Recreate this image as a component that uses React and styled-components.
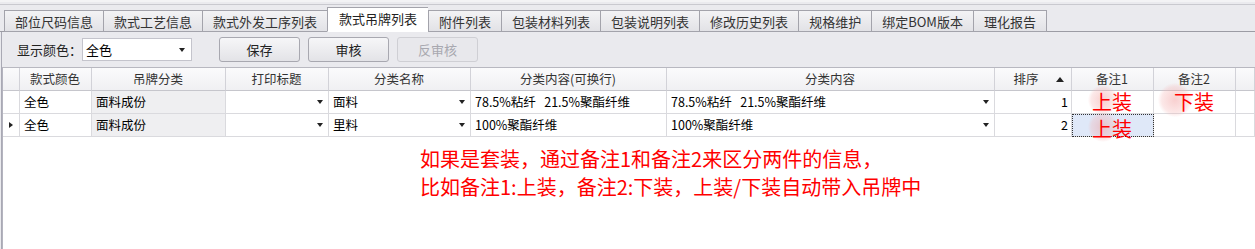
import React from "react";
import styled, { createGlobalStyle, css } from "styled-components";

const GlobalStyle = createGlobalStyle`
  html, body { margin: 0; padding: 0; background: #ffffff; }
  body { font-family: "Noto Sans CJK SC", "Noto Sans", sans-serif; }
  * { box-sizing: border-box; }
`;

const Page = styled.div`
  width: 1255px;
  height: 249px;
  overflow: hidden;
  display: flex;
  flex-direction: column;
  background: #eaeaee;
`;

const TopStrip = styled.div`
  height: 5px;
  border-top: 2px solid #f3f3f5;
  border-bottom: 1px solid #c9c9cf;
  background: #eaeaee;
`;

const TabStrip = styled.div`
  display: flex;
  align-items: flex-end;
  height: 27px;
  padding-left: 4px;
  border-bottom: 1px solid #9c9ca4;
`;

const Tab = styled.div`
  height: 22px;
  margin-bottom: -1px;
  padding: 0 10px;
  display: flex;
  align-items: center;
  font-size: 13px;
  line-height: 1;
  color: #333;
  white-space: nowrap;
  background: linear-gradient(#f3f3f5, #e2e2e6);
  border: 1px solid #a3a3ab;
  border-right: none;
  &:last-child { border-right: 1px solid #a3a3ab; }
  ${(p) =>
    p.$active &&
    css`
      height: 25px;
      padding: 0 11px 2px;
      background: #ffffff;
      border-bottom-color: #ffffff;
      color: #222;
    `}
`;

const Panel = styled.div`
  flex: 1;
  display: flex;
  flex-direction: column;
  border-left: 1px solid #a9a9b4;
  margin-left: 1px;
`;

const Toolbar = styled.div`
  height: 35px;
  display: flex;
  align-items: center;
  padding-left: 15px;
`;

const Label = styled.span`
  font-size: 13px;
  color: #222;
  line-height: 1;
`;

const Select = styled.div`
  width: 110px;
  height: 23px;
  background: #fff;
  border: 1px solid #c4c4cc;
  display: flex;
  align-items: center;
  justify-content: space-between;
  padding: 0 6px 0 3px;
  font-size: 13px;
  color: #000;
  margin-right: 27px;
`;

const Caret = styled.span`
  width: 0;
  height: 0;
  border-left: 3.5px solid transparent;
  border-right: 3.5px solid transparent;
  border-top: 4px solid #222;
  flex-shrink: 0;
`;

const SortUp = styled.span`
  width: 0;
  height: 0;
  border-left: 4px solid transparent;
  border-right: 4px solid transparent;
  border-bottom: 5px solid #222;
  position: absolute;
  right: 7px;
  top: 9px;
`;

const Button = styled.div`
  width: 81px;
  height: 25px;
  margin-right: 8px;
  border: 1px solid ${(p) => (p.$disabled ? "#cfcfd4" : "#a8a8b0")};
  border-radius: 3px;
  background: ${(p) =>
    p.$disabled ? "#e8e8ec" : "linear-gradient(#f6f6f8, #e3e3e7)"};
  color: ${(p) => (p.$disabled ? "#a8a8b0" : "#222")};
  font-size: 13px;
  display: flex;
  align-items: center;
  justify-content: center;
`;

const GridArea = styled.div`
  flex: 1;
  background: #ffffff;
  border-top: 1px solid #b8b8c0;
  border-left: 1px solid #b4b4bf;
  display: flex;
  flex-direction: column;
`;

const COLS = "17px 72px 134px 103px 142px 196px 328px 77px 82px 82px 1fr";

const Row = styled.div`
  display: grid;
  grid-template-columns: ${COLS};
  height: 23px;
  ${(p) =>
    p.$header &&
    css`
      background: linear-gradient(#fbfbfc, #efeff2);
    `}
`;

const Cell = styled.div`
  position: relative;
  border-right: 1px solid ${(p) => (p.$header ? "#d2d2d8" : "#dadade")};
  border-bottom: 1px solid ${(p) => (p.$header ? "#c6c6cc" : "#dadade")};
  display: flex;
  align-items: center;
  justify-content: ${(p) =>
    p.$align === "center" ? "center" : p.$align === "right" ? "flex-end" : "space-between"};
  padding: 0 ${(p) => (p.$align === "right" ? "3px" : "5px")} 0 4px;
  padding-right: ${(p) => (p.$padRight ? `${p.$padRight}px` : undefined)};
  font-size: 12.5px;
  line-height: 1;
  color: ${(p) => (p.$header ? "#333" : "#000")};
  background: ${(p) => p.$bg || "transparent"};
  white-space: ${(p) => (p.$pre ? "pre" : "nowrap")};
  ${(p) =>
    p.$selected &&
    css`
      background: #dfe8f8;
      outline: 1px dotted #333;
      outline-offset: -1px;
    `}
`;

const NoteText = styled.span`
  position: relative;
  z-index: 1;
  font-size: 20px;
  color: #ff0000;
  line-height: 1;
  top: ${(p) => p.$shift || 0}px;
`;

const Glow = styled.span`
  position: absolute;
  left: ${(p) => p.$x}px;
  top: ${(p) => p.$y}px;
  width: ${(p) => p.$size}px;
  height: ${(p) => p.$size}px;
  border-radius: 50%;
  background: radial-gradient(circle, rgba(240, 150, 150, 0.45) 0%, rgba(245, 180, 180, 0.3) 55%, rgba(255, 230, 230, 0) 72%);
  z-index: 0;
  pointer-events: none;
`;

const RowMarker = styled.span`
  width: 0;
  height: 0;
  border-top: 3.5px solid transparent;
  border-bottom: 3.5px solid transparent;
  border-left: 4px solid #222;
  margin-left: 2px;
`;

const Annotation = styled.div`
  padding-left: 417px;
  margin-top: 8px;
  font-size: 20px;
  line-height: 28px;
  color: #ff0000;
  white-space: nowrap;
  font-family: "Noto Sans CJK SC", sans-serif;
`;

const tabs = [
  "部位尺码信息",
  "款式工艺信息",
  "款式外发工序列表",
  "款式吊牌列表",
  "附件列表",
  "包装材料列表",
  "包装说明列表",
  "修改历史列表",
  "规格维护",
  "绑定BOM版本",
  "理化报告",
];

const headers = [
  "",
  "款式颜色",
  "吊牌分类",
  "打印标题",
  "分类名称",
  "分类内容(可换行)",
  "分类内容",
  "排序",
  "备注1",
  "备注2",
  "",
];

const rows = [
  {
    color: "全色",
    cat: "面料成份",
    name: "面料",
    content1: "78.5%粘纤   21.5%聚酯纤维",
    content2: "78.5%粘纤   21.5%聚酯纤维",
    order: "1",
    note1: "上装",
    note2: "下装",
  },
  {
    color: "全色",
    cat: "面料成份",
    name: "里料",
    content1: "100%聚酯纤维",
    content2: "100%聚酯纤维",
    order: "2",
    note1: "上装",
    note2: "",
    current: true,
  },
];

export default function App() {
  return (
    <>
      <GlobalStyle />
      <Page>
        <TopStrip />
        <TabStrip>
          {tabs.map((t) => (
            <Tab key={t} $active={t === "款式吊牌列表"}>
              {t}
            </Tab>
          ))}
        </TabStrip>
        <Panel>
          <Toolbar>
            <Label>显示颜色：</Label>
            <Select>
              <span>全色</span>
              <Caret />
            </Select>
            <Button>保存</Button>
            <Button>审核</Button>
            <Button $disabled>反审核</Button>
          </Toolbar>
          <GridArea>
            <Row $header>
              {headers.map((h, i) => (
                <Cell key={i} $header $align="center" $padRight={h === "排序" ? 18 : 0}>
                  {h}
                  {h === "排序" && <SortUp />}
                </Cell>
              ))}
            </Row>
            {rows.map((r, i) => (
              <Row key={i}>
                <Cell $align="left">{r.current && <RowMarker />}</Cell>
                <Cell>{r.color}</Cell>
                <Cell $bg="#efeff1">{r.cat}</Cell>
                <Cell>
                  <span />
                  <Caret />
                </Cell>
                <Cell>
                  <span>{r.name}</span>
                  <Caret />
                </Cell>
                <Cell $pre>{r.content1}</Cell>
                <Cell $pre>
                  <span>{r.content2}</span>
                  <Caret />
                </Cell>
                <Cell $align="right">{r.order}</Cell>
                <Cell $align="center" $selected={r.current}>
                  <Glow $x={16} $y={i === 0 ? -6 : -2} $size={30} />
                  <NoteText $shift={r.current ? 4 : 0}>{r.note1}</NoteText>
                </Cell>
                <Cell $align="center">
                  {r.note2 && <Glow $x={4} $y={-8} $size={34} />}
                  {r.note2 && <NoteText>{r.note2}</NoteText>}
                </Cell>
                <Cell />
              </Row>
            ))}
            <Annotation>
              <div>如果是套装，通过备注1和备注2来区分两件的信息，</div>
              <div>比如备注1:上装，备注2:下装，上装/下装自动带入吊牌中</div>
            </Annotation>
          </GridArea>
        </Panel>
      </Page>
    </>
  );
}
